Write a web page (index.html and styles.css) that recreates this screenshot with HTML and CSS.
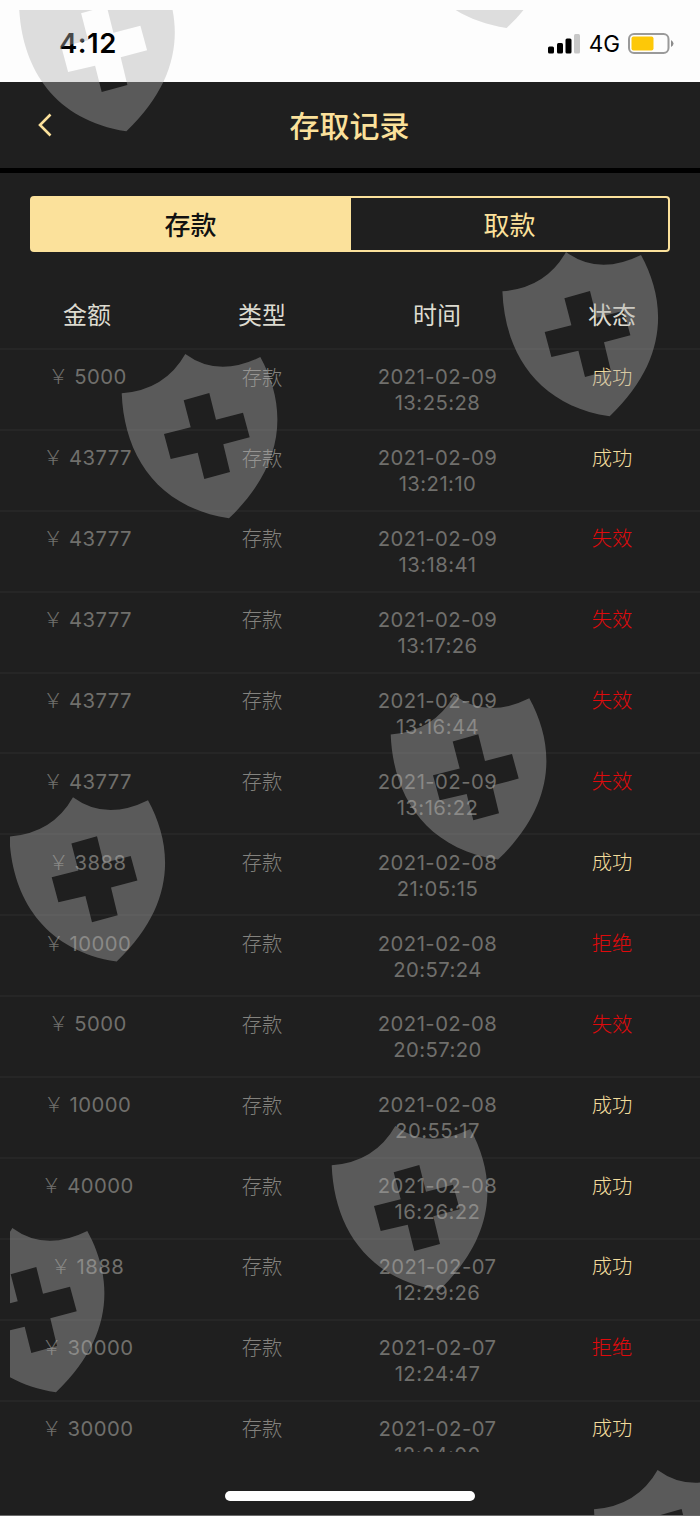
FILE: index.html
```html
<!DOCTYPE html>
<html lang="zh-CN">
<head>
    <meta charset="UTF-8">
    <meta name="viewport" content="width=device-width, initial-scale=1.0">
    <title>存取记录</title>
    <link rel="stylesheet" href="styles.css">
</head>
<body>
    <div class="status-bar">
        <span class="clock">4:12</span>
        <div class="status-icons">
            <svg class="signal" width="32" height="20" viewBox="0 0 32 20">
                <rect x="0" y="12.5" width="6" height="7" rx="1.5"/>
                <rect x="9" y="9" width="6" height="10.5" rx="1.5"/>
                <rect x="17.5" y="4.5" width="6" height="15" rx="1.5"/>
                <rect class="signal-off" x="26" y="0" width="6" height="19.5" rx="1.5"/>
            </svg>
            <span class="network">4G</span>
            <svg class="battery" width="46" height="22" viewBox="0 0 46 22">
                <rect class="battery-case" x="1" y="1" width="39.5" height="19" rx="5"/>
                <rect class="battery-level" x="3.5" y="3.5" width="22" height="14" rx="2"/>
                <path class="battery-tip" d="M43 7 Q45.5 8.5 45.5 10.5 Q45.5 12.5 43 14 Z"/>
            </svg>
        </div>
    </div>

    <div class="header">
        <svg class="back" width="14" height="24" viewBox="0 0 14 24">
            <path d="M12.5 1.5 L2 12 L12.5 22.5"/>
        </svg>
        <h1>存取记录</h1>
    </div>

    <div class="tabs">
        <button class="tab active">存款</button>
        <button class="tab">取款</button>
    </div>

    <div class="row table-head">
        <span>金额</span>
        <span>类型</span>
        <span>时间</span>
        <span>状态</span>
    </div>

    <div class="list" id="list">
        <!-- rows are generated below -->
    </div>

    <div class="home-bar"></div>

    <svg class="watermark" width="690" height="1506" viewBox="10 10 690 1506">
        <defs>
            <path id="shield" fill-rule="evenodd" d="M0.7 39.3 Q44 36 64.3 0 Q97 24 139.3 3 C165 50 167 108 108 164.3 C35 153 3 100 0.7 39.3 Z
                M62.7 46.3 L88.3 39 L95 65.7 L122 58.7 L128.7 83.3 L102.3 90.3 L109 118 L83.3 125 L76.7 98.7 L49.7 105 L43 80 L69.7 73.3 Z"/>
        </defs>
        <use href="#shield" x="18.4" y="-33"/>
        <use href="#shield" x="398.7" y="-136.3"/>
        <use href="#shield" x="501.7" y="252"/>
        <use href="#shield" x="121" y="354"/>
        <use href="#shield" x="390" y="695.3"/>
        <use href="#shield" x="8.7" y="797.2"/>
        <use href="#shield" x="331" y="1126"/>
        <use href="#shield" x="-52" y="1228"/>
        <use href="#shield" x="593.3" y="1470"/>
    </svg>

    <script>
        const records = [
            ['5000', '2021-02-09', '13:25:28', '成功'],
            ['43777', '2021-02-09', '13:21:10', '成功'],
            ['43777', '2021-02-09', '13:18:41', '失效'],
            ['43777', '2021-02-09', '13:17:26', '失效'],
            ['43777', '2021-02-09', '13:16:44', '失效'],
            ['43777', '2021-02-09', '13:16:22', '失效'],
            ['3888', '2021-02-08', '21:05:15', '成功'],
            ['10000', '2021-02-08', '20:57:24', '拒绝'],
            ['5000', '2021-02-08', '20:57:20', '失效'],
            ['10000', '2021-02-08', '20:55:17', '成功'],
            ['40000', '2021-02-08', '16:26:22', '成功'],
            ['1888', '2021-02-07', '12:29:26', '成功'],
            ['30000', '2021-02-07', '12:24:47', '拒绝'],
            ['30000', '2021-02-07', '12:24:00', '成功']
        ];

        document.getElementById('list').innerHTML = records.map(([amount, date, time, status]) => `
            <div class="row record">
                <span><span class="yen">￥</span> ${amount}</span>
                <span class="type">存款</span>
                <span class="time">${date}<br>${time}</span>
                <span class="status ${status === '成功' ? 'success' : 'fail'}">${status}</span>
            </div>
        `).join('');
    </script>
</body>
</html>
```

FILE: styles.css
```css
* {
    box-sizing: border-box;
}

body {
    position: relative;
    display: flex;
    flex-direction: column;
    width: 700px;
    height: 1516px;
    margin: 0;
    overflow: hidden;
    border-bottom: 1px solid #6a6a6a;
    background-color: #1f1f1f;
    font-family: Inter, "Noto Sans CJK SC", sans-serif;
}

.status-bar {
    display: flex;
    justify-content: space-between;
    align-items: center;
    flex: none;
    height: 82px;
    padding: 5px 26px 0 59px;
    background-color: #fdfdfd;
    color: #000;
}

.clock {
    margin-top: -2px;
    font-size: 27.5px;
    font-weight: 600;
    letter-spacing: 0.5px;
}

.status-icons {
    display: flex;
    align-items: center;
}

.network {
    margin: 0 8px 0 9px;
    font-size: 22.5px;
    font-weight: 400;
}

.signal-off {
    fill: #c8c8c8;
}

.battery-case {
    fill: none;
    stroke: #9a9a9a;
    stroke-width: 2;
}

.battery-level {
    fill: #fdc808;
}

.battery-tip {
    fill: #8c8c8c;
}

.header {
    display: flex;
    align-items: center;
    flex: none;
    height: 91px;
    padding: 0 38px;
    border-bottom: 5px solid #000;
}

.back {
    fill: none;
    stroke: #fbe19b;
    stroke-width: 2.6;
}

h1 {
    flex: 1;
    margin: -2px 15px 0 0;
    text-align: center;
    color: #fbe19b;
    font-size: 30px;
    font-weight: 500;
}

.tabs {
    display: flex;
    flex: none;
    height: 56px;
    margin: 23px 30px 0;
    border: 2px solid #fbe19b;
    border-radius: 4px;
}

.tab {
    flex: 1;
    padding: 0 0 1px;
    border: none;
    background: none;
    color: #fbe19b;
    font-family: inherit;
    font-size: 26px;
}

.tab.active {
    flex: 0 0 319px;
    padding-right: 2px;
    background-color: #fbe19b;
    color: #111;
    font-weight: 500;
}

.row {
    display: grid;
    grid-template-columns: repeat(4, 175px);
    flex: none;
    border-bottom: 2px solid #262626;
    text-align: center;
}

.table-head {
    height: 98px;
    padding-top: 45px;
    color: #dddbd0;
    font-size: 24px;
    line-height: 38px;
}

.table-head span {
    padding-right: 1px;
}

.list {
    flex: none;
    height: 1102px;
    overflow: hidden;
}

.record {
    height: 80.9px;
    padding-top: 14.3px;
    color: #706f6c;
    font-size: 20.3px;
    line-height: 26px;
    letter-spacing: 0.45px;
}

.yen {
    font-weight: 300;
    letter-spacing: -0.5px;
}

.type,
.status {
    padding: 0.4px 1px 0 0;
    font-weight: 300;
    letter-spacing: 0;
}

.type {
    color: #83827e;
}

.success {
    color: #f3dd9c;
}

.fail {
    color: #e00a0c;
}

.home-bar {
    flex: none;
    align-self: center;
    width: 250px;
    height: 10px;
    margin-top: 39px;
    border-radius: 5px;
    background-color: #fff;
}

.watermark {
    position: absolute;
    top: 10px;
    left: 10px;
    overflow: hidden;
    fill: rgba(175, 175, 175, 0.41);
}
```
